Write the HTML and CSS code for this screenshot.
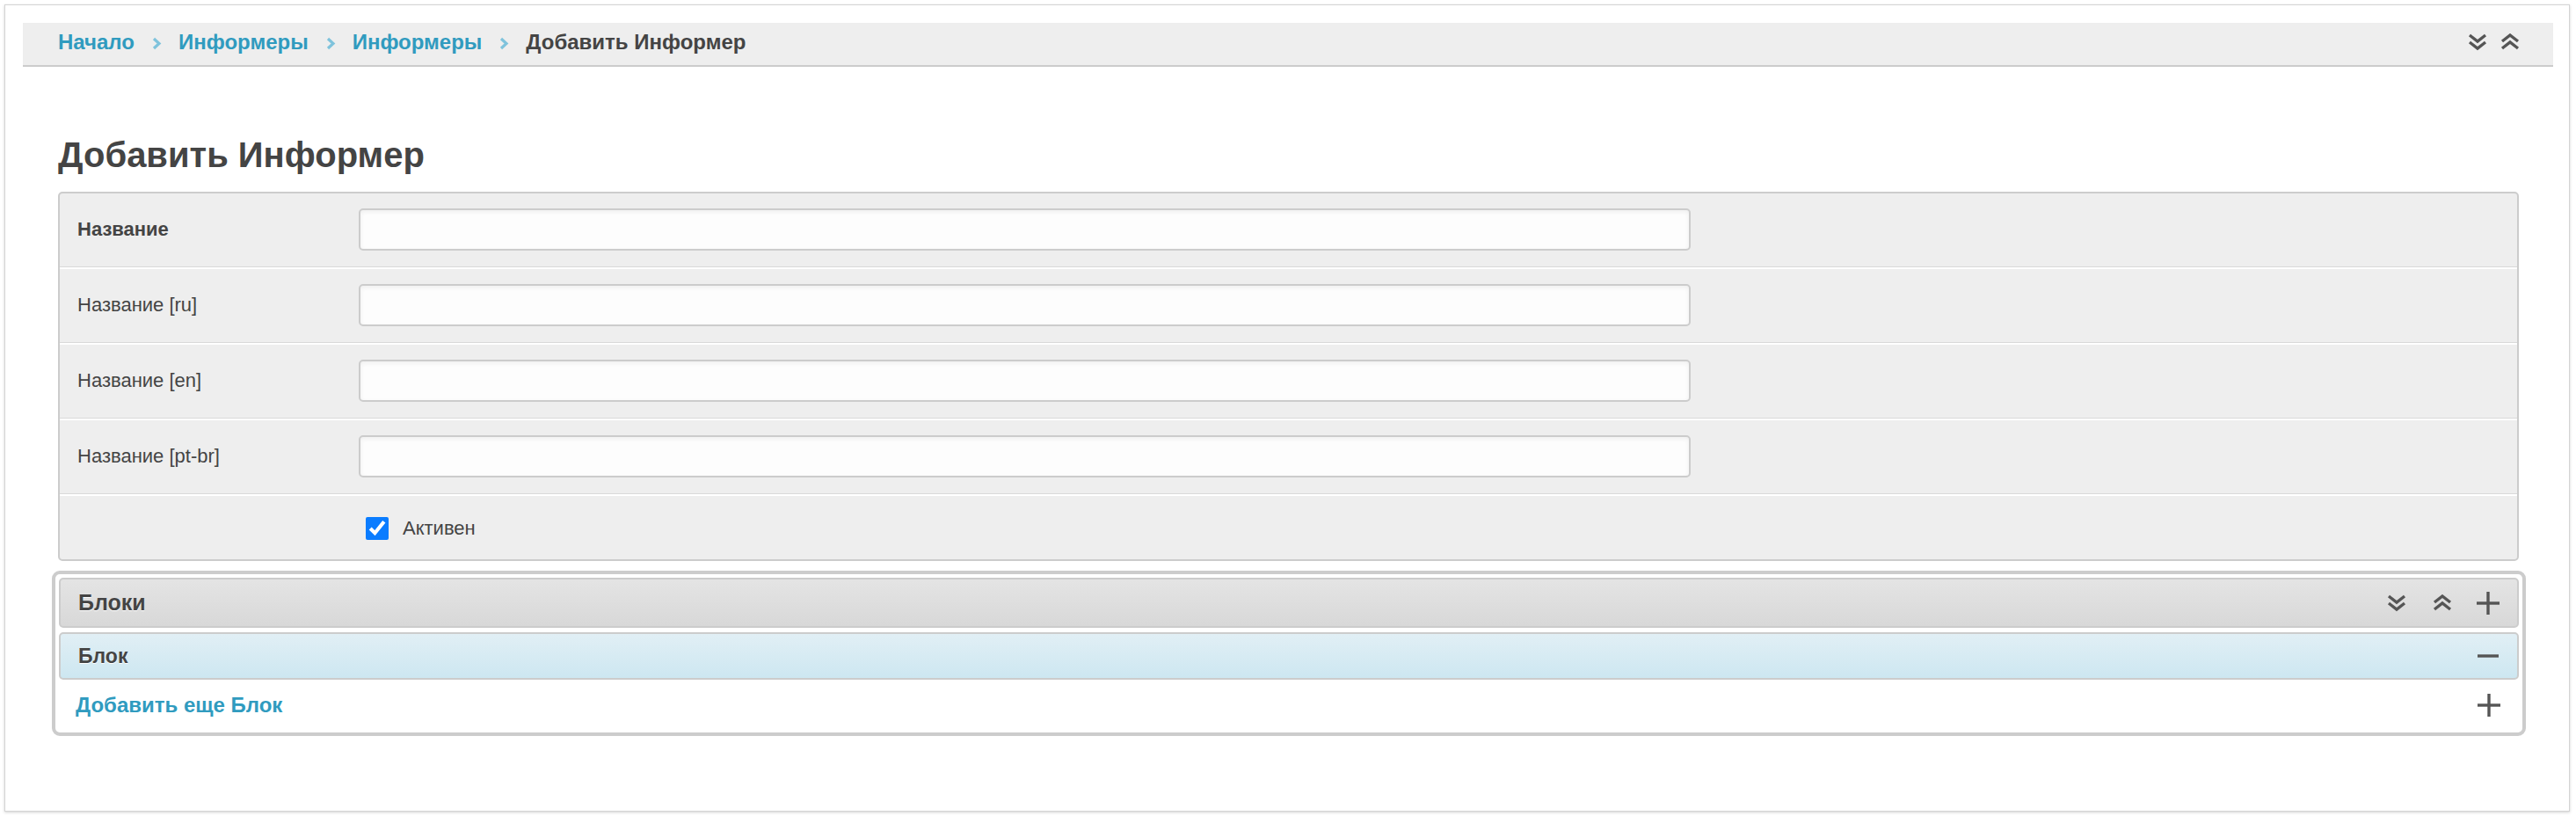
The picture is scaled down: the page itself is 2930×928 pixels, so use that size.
FILE: index.html
```html
<!DOCTYPE html>
<html lang="ru">
<head>
<meta charset="utf-8">
<title>Добавить Информер</title>
<link rel="stylesheet" href="styles.css">
</head>
<body>
<div class="card">
  <div class="crumbs">
    <nav class="crumb-list">
      <a class="crumb-link" href="#">Начало</a>
      <svg class="crumb-sep" viewBox="0 0 12 14"><polyline points="3,1.5 9,7 3,12.5"/></svg>
      <a class="crumb-link" href="#">Информеры</a>
      <svg class="crumb-sep" viewBox="0 0 12 14"><polyline points="3,1.5 9,7 3,12.5"/></svg>
      <a class="crumb-link" href="#">Информеры</a>
      <svg class="crumb-sep" viewBox="0 0 12 14"><polyline points="3,1.5 9,7 3,12.5"/></svg>
      <span class="crumb-current">Добавить Информер</span>
    </nav>
    <div class="tools">
      <svg class="ico dbl" viewBox="0 0 22 20"><polyline points="2,2 11,9 20,2"/><polyline points="2,10 11,17 20,10"/></svg>
      <svg class="ico dbl" viewBox="0 0 22 20"><polyline points="2,9 11,2 20,9"/><polyline points="2,17 11,10 20,17"/></svg>
    </div>
  </div>

  <div class="content">
    <h1 class="title">Добавить Информер</h1>

    <div class="form-panel">
      <div class="row">
        <div class="label strong">Название</div>
        <div class="field"><input class="text" type="text"></div>
      </div>
      <div class="row">
        <div class="label">Название [ru]</div>
        <div class="field"><input class="text" type="text"></div>
      </div>
      <div class="row">
        <div class="label">Название [en]</div>
        <div class="field"><input class="text" type="text"></div>
      </div>
      <div class="row">
        <div class="label">Название [pt-br]</div>
        <div class="field"><input class="text" type="text"></div>
      </div>
      <div class="row check-row">
        <div class="label"></div>
        <div class="field">
          <label class="check"><input class="box" type="checkbox" checked><span>Активен</span></label>
        </div>
      </div>
    </div>

    <div class="group">
      <div class="group-head">
        <span class="head-text">Блоки</span>
        <div class="head-tools">
          <svg class="ico dbl" viewBox="0 0 22 20"><polyline points="2,2 11,9 20,2"/><polyline points="2,10 11,17 20,10"/></svg>
          <svg class="ico dbl" viewBox="0 0 22 20"><polyline points="2,9 11,2 20,9"/><polyline points="2,17 11,10 20,17"/></svg>
          <svg class="ico sign" viewBox="0 0 26 26"><line x1="0" y1="13" x2="26" y2="13"/><line x1="13" y1="0" x2="13" y2="26"/></svg>
        </div>
      </div>
      <div class="item-head">
        <span class="head-text item-text">Блок</span>
        <svg class="ico sign" viewBox="0 0 26 26"><line x1="1" y1="13" x2="25" y2="13"/></svg>
      </div>
      <div class="add-row">
        <a class="add-link" href="#">Добавить еще Блок</a>
        <svg class="ico sign" viewBox="0 0 26 26"><line x1="0" y1="13" x2="26" y2="13"/><line x1="13" y1="0" x2="13" y2="26"/></svg>
      </div>
    </div>
  </div>
</div>
</body>
</html>
```

FILE: styles.css
```css
* { box-sizing: border-box; }

body {
  margin: 0;
  padding: 5px 7px 6px 5px;
  background: #fff;
  font-family: "Liberation Sans", Arial, sans-serif;
  color: #444;
}

.card {
  border: 1px solid #d4d4d4;
  box-shadow: 0 1px 3px rgba(0, 0, 0, 0.18);
  background: #fff;
  padding: 20px 18px 85px 20px;
}

/* breadcrumbs */
.crumbs {
  display: flex;
  align-items: center;
  justify-content: space-between;
  height: 50px;
  padding: 0 38px 4px 40px;
  background: #eee;
  border-bottom: 2px solid #ccc;
}

.crumb-list {
  display: flex;
  align-items: center;
  font-size: 24px;
  font-weight: bold;
}

.crumb-link {
  color: #309bbf;
  text-decoration: none;
}

.crumb-current { color: #444; }

.crumb-sep {
  width: 12px;
  height: 15px;
  margin: 2px 19px 0 19px;
  fill: none;
  stroke: #7fc3dc;
  stroke-width: 3.2;
}

.tools {
  display: flex;
  align-items: center;
  gap: 15px;
}

.ico {
  fill: none;
  stroke: #555;
  display: block;
}

.dbl {
  width: 22px;
  height: 20px;
  stroke-width: 3.4;
}

.sign {
  width: 26px;
  height: 26px;
  stroke-width: 3.4;
}

/* content */
.content {
  margin: 0 39px 0 40px;
}

.title {
  margin: 76px 0 18px;
  font-size: 40px;
  line-height: 48px;
  font-weight: bold;
  color: #444;
}

.form-panel {
  background: #eee;
  border: 2px solid #ccc;
  border-radius: 5px;
}

.row {
  display: flex;
  align-items: center;
  padding: 17px 0 18px 20px;
  border-top: 2px solid #fff;
  border-bottom: 1px solid #d9d9d9;
}

.row:first-child { border-top: none; }
.row:last-child { border-bottom: none; }

.label {
  width: 320px;
  flex: none;
  font-size: 22px;
  color: #444;
}

.label.strong { font-weight: bold; }

.text {
  display: block;
  width: 1515px;
  height: 48px;
  border: 2px solid #ccc;
  border-radius: 5px;
  background: #fdfdfd;
  box-shadow: inset 0 2px 5px #eee;
  font-size: 22px;
  font-family: inherit;
}

.check-row {
  padding-top: 24px;
  padding-bottom: 22px;
}

.check {
  display: flex;
  align-items: center;
  font-size: 22px;
  color: #444;
}

.box {
  width: 26px;
  height: 26px;
  margin: 0 16px 0 8px;
  accent-color: #0a7cff;
}

/* inline group */
.group {
  margin: 11px -8px 0 -7px;
  padding: 4px;
  border: 4px solid #ccc;
  border-radius: 9px;
  background: #fff;
}

.group-head,
.item-head {
  display: flex;
  align-items: center;
  justify-content: space-between;
  border: 2px solid #ccc;
  border-radius: 5px;
  padding: 0 20px 0 20px;
}

.group-head {
  height: 57px;
  background: linear-gradient(#e4e4e4, #d8d8d8);
}

.item-head {
  margin-top: 5px;
  height: 54px;
  background: linear-gradient(#e1eff5, #cde7f1);
}

.head-text {
  font-size: 25px;
  font-weight: bold;
  color: #444;
  text-shadow: 0 1px 0 #fff;
}

.item-text { font-size: 23px; }

.head-tools {
  display: flex;
  align-items: center;
}

.head-tools .dbl { margin-right: 30px; }
.head-tools .dbl + .dbl { margin-right: 28px; }

.add-row {
  display: flex;
  align-items: center;
  justify-content: space-between;
  height: 56px;
  padding: 2px 21px 0 19px;
}

.add-link {
  font-size: 24px;
  font-weight: bold;
  color: #309bbf;
  text-decoration: none;
}
```
